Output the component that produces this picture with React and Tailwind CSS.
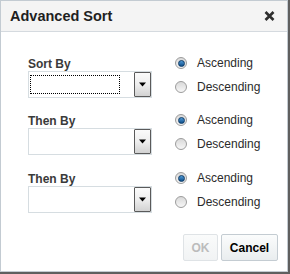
import React from "react";

const font = { fontFamily: '"Liberation Sans", Arial, sans-serif' };

function Radio({ checked }) {
  return (
    <span className="relative flex h-[12px] w-[12px] shrink-0 items-center justify-center rounded-full border border-[#9c9c9c] bg-gradient-to-b from-[#d9d9d9] to-[#f7f7f7]">
      {checked && (
        <span className="h-[7px] w-[7px] rounded-full border border-[#0c3a66] bg-gradient-to-b from-[#4f9ad6] to-[#0d4f8a]" />
      )}
    </span>
  );
}

function Select({ focused }) {
  return (
    <div className="flex h-[27px] w-[124px] border border-[#d6dde1] bg-white">
      <div className="flex-1">
        {focused && (
          <div className="ml-[1px] mt-[3px] h-[19px] w-[90px] border border-dotted border-black" />
        )}
      </div>
      <div className="flex h-[25px] w-[17px] items-center justify-center rounded-[1px] border border-[#5a5a5a] bg-gradient-to-b from-[#fbfbfb] via-[#eeeeee] to-[#d2d2d2]">
        <svg width="7" height="5" viewBox="0 0 7 5">
          <path d="M0 0.5 H7 L3.5 4.5 Z" fill="#000" />
        </svg>
      </div>
    </div>
  );
}

function Group({ label, focused, className }) {
  return (
    <div className={"flex " + className}>
      <div className="w-[124px] pt-[6px]">
        <div className="h-[14px] text-[12px] font-bold leading-[14px] text-[#3a3a3a]">{label}</div>
        <Select focused={focused} />
      </div>
      <div className="ml-[23px] flex flex-col">
        <div className="flex h-[24px] items-center gap-[10px]">
          <Radio checked />
          <span className="text-[12px] leading-[14px] text-[#2b2b2b]">Ascending</span>
        </div>
        <div className="flex h-[24px] items-center gap-[10px]">
          <Radio />
          <span className="text-[12px] leading-[14px] text-[#2b2b2b]">Descending</span>
        </div>
      </div>
    </div>
  );
}

export default function App() {
  return (
    <div className="h-[274px] w-[290px] bg-[#5f5f5f]" style={font}>
      <div className="flex h-[272px] w-[288px] flex-col border border-[#c3cbd2] bg-white">
        <div className="flex h-[31px] shrink-0 items-center justify-between border-b border-[#d5dadf] bg-[#f4f4f4] pl-[9px] pr-[12px]">
          <span className="text-[14.5px] font-bold leading-[16px] text-[#1f1f1f]">Advanced Sort</span>
          <svg width="11" height="10" viewBox="0 0 11 10">
            <path d="M1.5 1 L9.5 9 M9.5 1 L1.5 9" stroke="#2e2e2e" strokeWidth="2.6" />
          </svg>
        </div>
        <div className="flex flex-1 flex-col pl-[27px] pt-[19px]">
          <Group label="Sort By" focused />
          <Group label="Then By" className="mt-[9px]" />
          <Group label="Then By" className="mt-[10px]" />
          <div className="mt-auto flex justify-end gap-[3px] pb-[10px] pr-[9px]">
            <button className="h-[27px] w-[35px] rounded-[2px] border border-[#dfe3e6] bg-gradient-to-b from-[#fafbfb] to-[#f1f3f4] text-[12px] font-bold text-[#bcbcbc]">
              OK
            </button>
            <button className="h-[27px] w-[57px] rounded-[2px] border border-[#c4ccd2] bg-gradient-to-b from-[#fbfcfc] to-[#e9edef] text-[12px] font-bold text-[#000]">
              Cancel
            </button>
          </div>
        </div>
      </div>
    </div>
  );
}
